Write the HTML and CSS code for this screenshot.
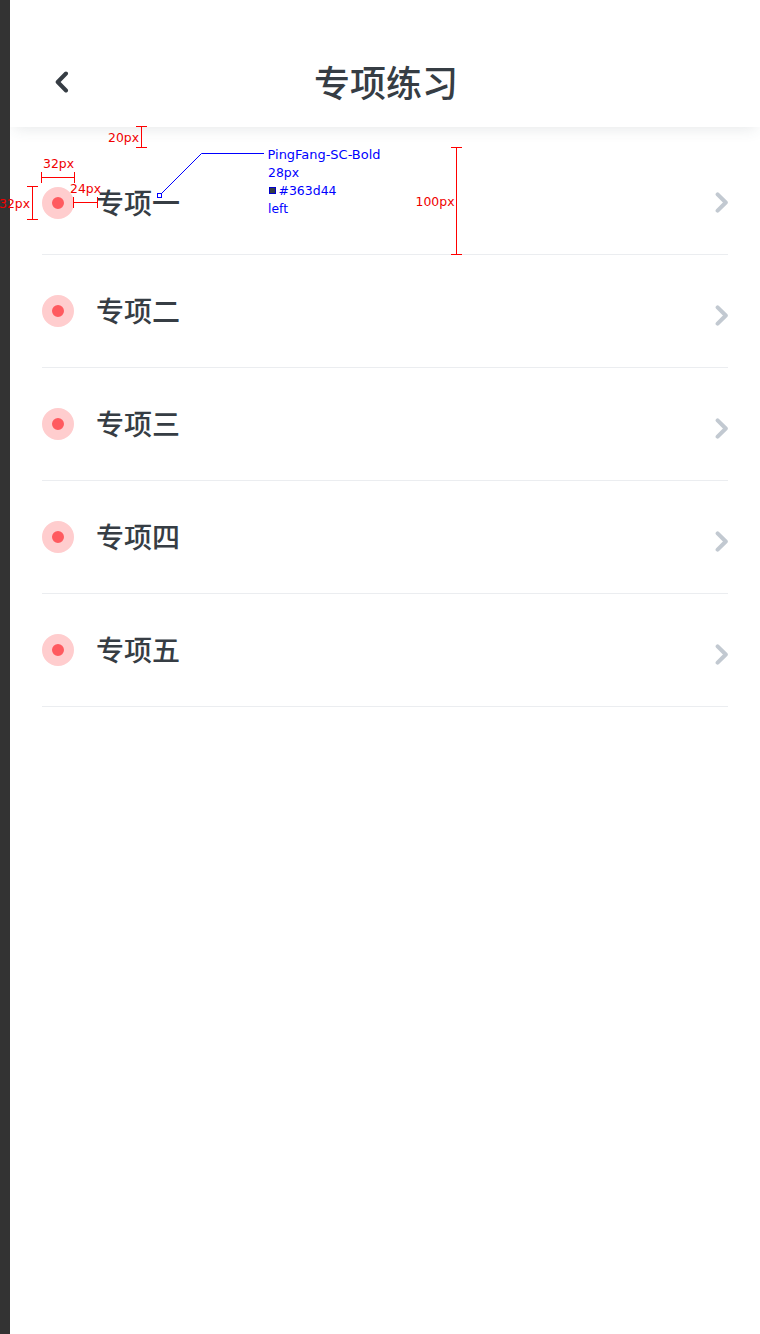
FILE: index.html
```html
<!DOCTYPE html>
<html lang="zh-CN">
<head>
<meta charset="utf-8">
<title>专项练习</title>
<link rel="stylesheet" href="styles.css">
</head>
<body>
<div class="screen">
  <header class="header">
    <svg class="back" width="14" height="22" viewBox="0 0 14 22"><path d="M11 2.500 2.700 11 11 19.500"/></svg>
    <h1 class="title">专项练习</h1>
  </header>
  <main class="list">
    <div class="row first"><span class="dot"></span><span class="label">专项一</span><svg class="chevron" width="14" height="22" viewBox="0 0 14 22"><path d="M3.600 2.300 11.800 10.500 3.600 18.700"/></svg></div>
    <div class="row"><span class="dot"></span><span class="label">专项二</span><svg class="chevron" width="14" height="22" viewBox="0 0 14 22"><path d="M3.600 2.300 11.800 10.500 3.600 18.700"/></svg></div>
    <div class="row"><span class="dot"></span><span class="label">专项三</span><svg class="chevron" width="14" height="22" viewBox="0 0 14 22"><path d="M3.600 2.300 11.800 10.500 3.600 18.700"/></svg></div>
    <div class="row"><span class="dot"></span><span class="label">专项四</span><svg class="chevron" width="14" height="22" viewBox="0 0 14 22"><path d="M3.600 2.300 11.800 10.500 3.600 18.700"/></svg></div>
    <div class="row"><span class="dot"></span><span class="label">专项五</span><svg class="chevron" width="14" height="22" viewBox="0 0 14 22"><path d="M3.600 2.300 11.800 10.500 3.600 18.700"/></svg></div>
  </main>
</div>
<svg class="notes" width="760" height="270" viewBox="0 0 760 270">
  <g class="measure">
    <path d="M136 126.500h11M141.500 126v22M136 147.500h11"/>
    <path d="M41.500 172v11M41 177.500h34M74.500 172v11"/>
    <path d="M27 186.500h11M32.500 186v34M27 219.500h11"/>
    <path d="M73.500 197v11M73 202.500h25M97.500 197v11"/>
    <path d="M451 147.500h11M456.500 147v108M451 254.500h11"/>
    <text x="108" y="142" textLength="31" lengthAdjust="spacingAndGlyphs">20px</text>
    <text x="43" y="168" textLength="31" lengthAdjust="spacingAndGlyphs">32px</text>
    <text x="70" y="193" textLength="31" lengthAdjust="spacingAndGlyphs">24px</text>
    <text x="-1" y="208" textLength="31" lengthAdjust="spacingAndGlyphs">32px</text>
    <text x="415.500" y="206" textLength="39" lengthAdjust="spacingAndGlyphs">100px</text>
  </g>
  <g class="spec">
    <path d="M264 153.500H201.500L161 194"/>
    <rect class="handle" x="157.500" y="193.500" width="4" height="4"/>
    <rect class="swatch" x="269.500" y="187.500" width="6" height="6"/>
    <text x="267.500" y="159" textLength="113" lengthAdjust="spacingAndGlyphs">PingFang-SC-Bold</text>
    <text x="268" y="177" textLength="31" lengthAdjust="spacingAndGlyphs">28px</text>
    <text x="278.500" y="195" textLength="58" lengthAdjust="spacingAndGlyphs">#363d44</text>
    <text x="268" y="213" textLength="20" lengthAdjust="spacingAndGlyphs">left</text>
  </g>
</svg>
</body>
</html>
```
FILE: styles.css
```css
* { box-sizing: border-box; }
body {
  margin: 0;
  padding-left: 10px;
  min-height: 1334px;
  background: #333;
  color: #363d44;
  font-family: "Noto Sans CJK SC", sans-serif;
  position: relative;
}
.screen { min-height: 1334px; background: #fff; overflow: hidden; }
.header {
  height: 127px;
  padding: 37px 43px 0 45px;
  display: grid;
  grid-template-columns: 14px 1fr 14px;
  align-items: center;
  box-shadow: 0 6px 14px -4px rgba(54, 70, 84, .12);
}
.title { margin: 0; padding-bottom: 2px; font-size: 36px; line-height: 50px; font-weight: 500; text-align: center; }
.back, .chevron { display: block; fill: none; stroke-width: 4; stroke-linecap: round; stroke-linejoin: round; }
.back { stroke: #363d44; }
.list { padding: 20px 32px 0; }
.row {
  height: 113px;
  padding-top: 40px;
  border-bottom: 1px solid #ebedf0;
  display: flex;
  align-items: flex-start;
}
.row.first { height: 108px; }
.dot {
  width: 32px;
  height: 32px;
  border: 10px solid #ffcdce;
  border-radius: 50%;
  background: #ff5a5f;
}
.label { margin: -1px 0 0 22px; font-size: 28px; line-height: 32px; font-weight: 500; }
.chevron { margin: 10px 0 0 auto; stroke: #c2c9d1; }
.first .chevron { margin-top: 5px; }
.notes { position: absolute; left: 0; top: 0; font-family: "DejaVu Sans", sans-serif; font-size: 13px; }
.measure path { stroke: #f00; fill: none; shape-rendering: crispEdges; }
.measure text { fill: #f00000; }
.spec path { stroke: #00f; stroke-width: 1; fill: none; }
.spec text { fill: #00f; }
.handle { fill: #fff; stroke: #00f; }
.swatch { fill: #363d44; stroke: #00c; }
```
